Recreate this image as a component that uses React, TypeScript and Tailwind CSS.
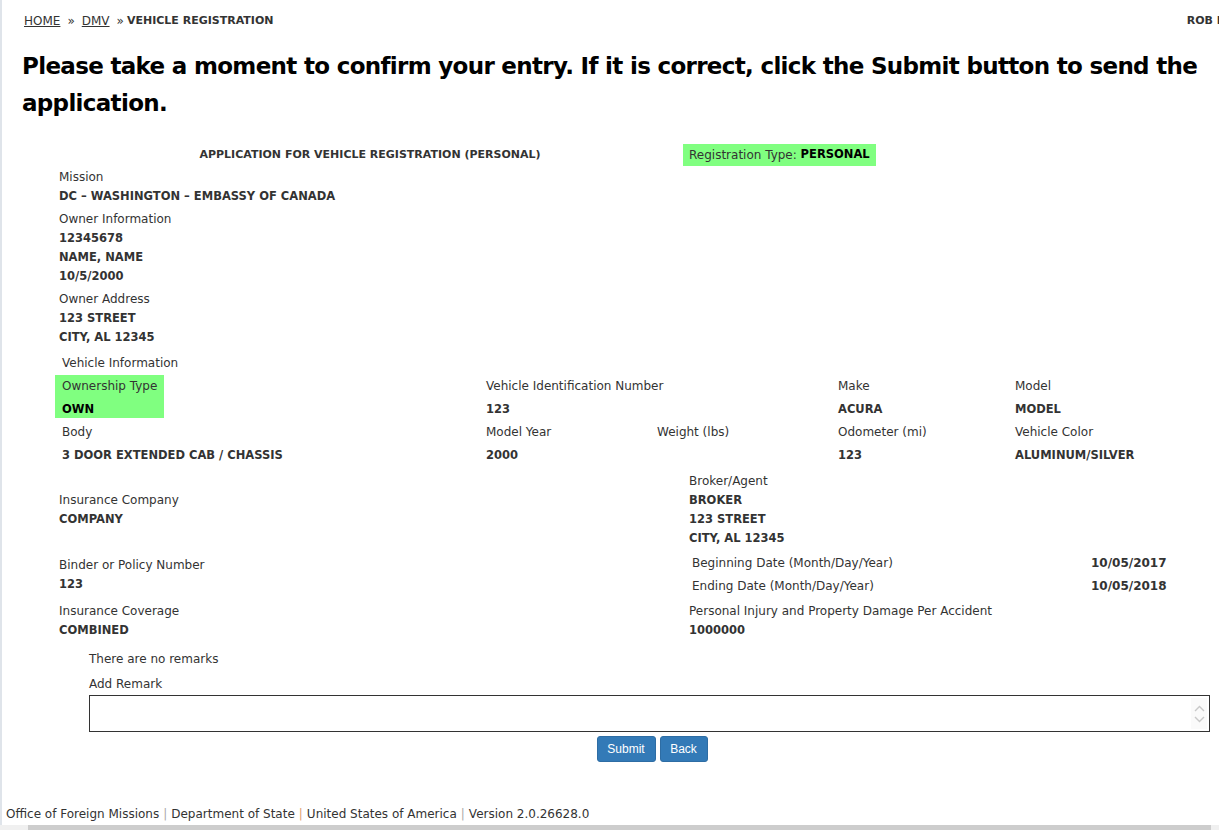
import React from 'react';

const font = { fontFamily: '"DejaVu Sans", Verdana, sans-serif' };

interface Field {
  label: string;
  values: string[];
}

const Label: React.FC<{ children: React.ReactNode }> = ({ children }) => (
  <div className="h-[19px] leading-[19px] text-[12px] text-[#333]">{children}</div>
);

const Value: React.FC<{ children: React.ReactNode }> = ({ children }) => (
  <div className="h-[19px] leading-[19px] text-[11.5px] font-bold text-[#333]">{children}</div>
);

const Block: React.FC<{ field: Field }> = ({ field }) => (
  <div>
    <Label>{field.label}</Label>
    {field.values.map((v, i) => (
      <Value key={i}>{v}</Value>
    ))}
  </div>
);

const Cell: React.FC<{ label: string; value?: string; className?: string }> = ({ label, value, className }) => (
  <div className={className}>
    <div className="h-[19px] leading-[19px] text-[12px]">{label}</div>
    {value && <div className="mt-[6px] h-[14px] leading-[14px] text-[11.5px] font-bold">{value}</div>}
  </div>
);

const App: React.FC = () => {
  const topFields: Field[] = [
    { label: 'Mission', values: ['DC \u2013 WASHINGTON \u2013 EMBASSY OF CANADA'] },
    { label: 'Owner Information', values: ['12345678', 'NAME, NAME', '10/5/2000'] },
    { label: 'Owner Address', values: ['123 STREET', 'CITY, AL 12345'] },
  ];

  const btn = { fontFamily: '"Liberation Sans", Arial, sans-serif' };

  return (
    <div className="relative w-[1219px] h-[830px] overflow-hidden bg-white text-[#333]" style={font}>
      {/* left frame edge */}
      <div className="absolute left-0 top-0 bottom-0 w-[2px] bg-[#dfe4ea]" />

      <div className="w-[1260px] pl-[24px]">
        {/* breadcrumb */}
        <div className="flex items-center h-[20px] mt-[11px] text-[12px]">
          <a className="underline">HOME</a>
          <span className="mx-[7px]">&raquo;</span>
          <a className="underline">DMV</a>
          <span className="ml-[7px] mr-[3px]">&raquo;</span>
          <span className="font-bold text-[11px]">VEHICLE REGISTRATION</span>
          <span className="ml-auto font-bold text-[11px] mr-[7px]">ROB NAME</span>
        </div>
      </div>

      <div className="pl-[22px] pr-[2px]">
        <h1 className="mt-[17px] text-[23px] leading-[37px] font-bold text-black tracking-[-0.68px]">
          Please take a moment to confirm your entry. If it is correct, click the Submit button to send the application.
        </h1>
      </div>

      <div className="pl-[59px] pr-[10px] mt-[22px]">
        {/* title row */}
        <div className="flex items-center h-[22px]">
          <div className="w-[624px] text-center text-[11px] font-bold pr-[2px]">
            APPLICATION FOR VEHICLE REGISTRATION (PERSONAL)
          </div>
          <div className="bg-[#80ff80] h-[22px] px-[6px] flex items-center text-[12px]">
            Registration Type:&nbsp;<span className="font-bold text-[11.5px] text-black">PERSONAL</span>
          </div>
        </div>

        <div className="mt-[2px] flex flex-col gap-[4px]">
          {topFields.map((f, i) => (
            <Block key={i} field={f} />
          ))}
        </div>

        {/* vehicle info */}
        <div className="mt-[7px] ml-[-4px] pl-[7px]">
          <Label>Vehicle Information</Label>
        </div>
        <div className="ml-[-4px] mt-[2px] grid grid-cols-[428px_174px_181px_177px_1fr]">
          <div className="bg-[#80ff80] w-[109px] pl-[7px] py-[2px]">
            <div className="h-[19px] leading-[19px] text-[12px]">Ownership Type</div>
            <div className="mt-[6px] h-[14px] leading-[14px] text-[11.5px] font-bold text-black">OWN</div>
          </div>
          <Cell className="col-span-2 pl-[3px] pt-[2px]" label="Vehicle Identification Number" value="123" />
          <Cell className="pt-[2px]" label="Make" value="ACURA" />
          <Cell className="pt-[2px]" label="Model" value="MODEL" />

          <Cell className="pl-[7px] pt-[5px]" label="Body" value="3 DOOR EXTENDED CAB / CHASSIS" />
          <Cell className="pl-[3px] pt-[5px]" label="Model Year" value="2000" />
          <Cell className="pt-[5px]" label="Weight (lbs)" />
          <Cell className="pt-[5px]" label="Odometer (mi)" value="123" />
          <Cell className="pt-[5px]" label="Vehicle Color" value="ALUMINUM/SILVER" />
        </div>

        {/* insurance */}
        <div className="mt-[10px] grid grid-cols-[630px_1fr] items-center">
          <Block field={{ label: 'Insurance Company', values: ['COMPANY'] }} />
          <Block field={{ label: 'Broker/Agent', values: ['BROKER', '123 STREET', 'CITY, AL 12345'] }} />
        </div>

        <div className="mt-[7px] grid grid-cols-[630px_1fr] items-center">
          <Block field={{ label: 'Binder or Policy Number', values: ['123'] }} />
          <div className="pl-[3px] flex flex-col gap-[4px] mt-[-2px]">
            <div className="flex h-[19px] items-center text-[12px]">
              <span className="w-[399px]">Beginning Date (Month/Day/Year)</span>
              <span className="font-bold">10/05/2017</span>
            </div>
            <div className="flex h-[19px] items-center text-[12px]">
              <span className="w-[399px]">Ending Date (Month/Day/Year)</span>
              <span className="font-bold">10/05/2018</span>
            </div>
          </div>
        </div>

        <div className="mt-[7px] grid grid-cols-[630px_1fr] items-center">
          <Block field={{ label: 'Insurance Coverage', values: ['COMBINED'] }} />
          <Block field={{ label: 'Personal Injury and Property Damage Per Accident', values: ['1000000'] }} />
        </div>

        {/* remarks */}
        <div className="ml-[30px] mt-[10px]">
          <div className="h-[19px] leading-[19px] text-[12px]">There are no remarks</div>
          <div className="mt-[6px] h-[19px] leading-[19px] text-[12px]">Add Remark</div>
          <div className="mt-[1px] w-[1121px] h-[37px] border border-[#333] relative">
            <div className="absolute right-[2px] top-[2px] bottom-[2px] w-[16px] bg-[#fafafa] flex flex-col items-center justify-center gap-[4px]">
              <svg width="11" height="7" viewBox="0 0 11 7"><path d="M1 6 L5.5 1.5 L10 6" fill="none" stroke="#c8c8c8" strokeWidth="1.4" /></svg>
              <svg width="11" height="7" viewBox="0 0 11 7"><path d="M1 1 L5.5 5.5 L10 1" fill="none" stroke="#c8c8c8" strokeWidth="1.4" /></svg>
            </div>
          </div>
          <div className="mt-[4px] flex justify-center gap-[4px] pl-[6px]">
            <button className="h-[26px] w-[59px] bg-[#337ab7] border border-[#2e6da4] rounded-[3px] text-white text-[12px]" style={btn}>Submit</button>
            <button className="h-[26px] w-[48px] bg-[#337ab7] border border-[#2e6da4] rounded-[3px] text-white text-[12px]" style={btn}>Back</button>
          </div>
        </div>
      </div>

      {/* footer */}
      <div className="absolute left-[6px] top-[805px] text-[12px] text-[#333] flex items-center h-[17px]">
        Office of Foreign Missions <span className="mx-[4px] text-[#aaa]">|</span> Department of State
        <span className="mx-[4px] text-[#e0a070]">|</span> United States of America
        <span className="mx-[4px] text-[#aaa]">|</span> Version 2.0.26628.0
      </div>

      {/* horizontal scrollbar */}
      <div className="absolute left-0 right-0 bottom-0 h-[5px] flex">
        <div className="w-[28px] bg-[#f0f0f0]" />
        <div className="flex-1 bg-[#cdcdcd]" />
        <div className="w-[8px] bg-[#f0f0f0]" />
      </div>
    </div>
  );
};

export default App;
